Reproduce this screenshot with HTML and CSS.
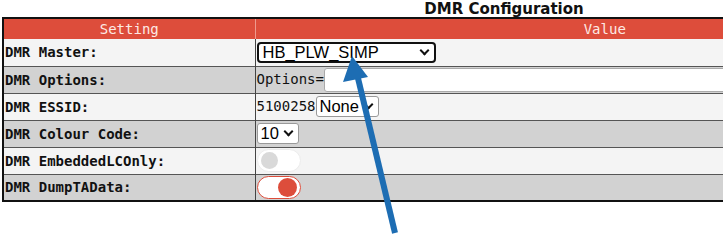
FILE: index.html
```html
<!DOCTYPE html>
<html>
<head>
    <title>DMR Configuration</title>
    <link rel="stylesheet" href="styles.css">
</head>
<body>
    <div class="page">
        <h2 class="title">DMR Configuration</h2>
        <table class="config">
            <tr>
                <th class="col-setting">Setting</th>
                <th>Value</th>
            </tr>
            <tr class="light">
                <td class="label">DMR Master:</td>
                <td>
                    <div class="select master">HB_PLW_SIMP<span class="chev"></span></div>
                </td>
            </tr>
            <tr class="grey">
                <td class="label">DMR Options:</td>
                <td class="inline">Options=<div class="text-input"></div></td>
            </tr>
            <tr class="light">
                <td class="label">DMR ESSID:</td>
                <td class="inline">5100258<div class="select small">None<span class="chev"></span></div></td>
            </tr>
            <tr class="grey">
                <td class="label">DMR Colour Code:</td>
                <td><div class="select small">10<span class="chev"></span></div></td>
            </tr>
            <tr class="light">
                <td class="label">DMR EmbeddedLCOnly:</td>
                <td><div class="toggle"><span class="knob"></span></div></td>
            </tr>
            <tr class="grey">
                <td class="label">DMR DumpTAData:</td>
                <td><div class="toggle on"><span class="knob"></span></div></td>
            </tr>
        </table>
    </div>

    <svg class="arrow" width="723" height="242" viewBox="0 0 723 242">
        <line x1="395" y1="233" x2="357" y2="74" stroke="#1d6db3" stroke-width="6" />
        <polygon points="352,56 368,77 343,82" fill="#1d6db3" />
    </svg>
</body>
</html>
```

FILE: styles.css
```css
* {
    box-sizing: border-box;
    margin: 0;
    padding: 0;
}

body {
    background-color: #fff;
    width: 723px;
    height: 242px;
    overflow: hidden;
    position: relative;
}

.page {
    padding: 2px 0 0 2px;
    width: 960px;
}

.title {
    font-family: "DejaVu Sans", Verdana, sans-serif;
    font-weight: bold;
    font-size: 15px;
    line-height: 15px;
    color: #111;
    text-align: center;
    padding-left: 46px;
}

.config {
    border-collapse: collapse;
    width: 954px;
    border: 2px solid #111;
    font-family: "DejaVu Sans Mono", "Liberation Mono", monospace;
    font-size: 14px;
}

.config th {
    background-color: #dd4d3b;
    color: #fde9e4;
    font-weight: normal;
    height: 21px;
    border-left: 1px solid #ee9a8e;
}

.config th.col-setting {
    width: 252px;
    border-left: none;
}

.config td {
    height: 27px;
    border-top: 1px solid #555;
    border-left: 1px solid #444;
    padding: 0 0 0 1px;
    color: #111;
}

.config td.label {
    border-left: none;
    font-weight: bold;
    padding-left: 1px;
}

.light td {
    background-color: #f4f4f4;
}

.grey td {
    background-color: #d2d2d2;
}

.config tr:nth-child(2) td {
    border-top: none;
}

.inline {
    white-space: nowrap;
}

.inline > * {
    vertical-align: middle;
}

.select {
    display: inline-flex;
    align-items: center;
    font-family: "Liberation Sans", Arial, sans-serif;
    font-size: 16.5px;
    color: #000;
    background-color: #fff;
    border: 1px solid #999;
    border-radius: 3px;
    height: 21px;
    padding: 0 4px 0 3px;
}

.select.master {
    width: 179px;
    border: 2px solid #111;
    border-radius: 4px;
    padding-left: 4px;
}

.select.master .chev {
    margin-left: auto;
}

.chev {
    display: inline-block;
    width: 7px;
    height: 7px;
    border-right: 2px solid #111;
    border-bottom: 2px solid #111;
    transform: rotate(45deg);
    margin: -4px 2px 0 6px;
}

.text-input {
    display: inline-block;
    width: 420px;
    height: 24px;
    background-color: #fff;
    border: 1px solid #aaa;
    border-radius: 3px;
}

.toggle {
    width: 44px;
    height: 23px;
    border-radius: 12px;
    background-color: #fff;
    border: 1px solid #ececec;
    display: flex;
    align-items: center;
    padding: 0 3px;
}

.knob {
    width: 17px;
    height: 17px;
    border-radius: 50%;
    background-color: #d9d9d9;
}

.toggle.on {
    border-color: #dd4d3b;
    justify-content: flex-end;
}

.toggle.on .knob {
    background-color: #dd4d3b;
    width: 19px;
    height: 19px;
}

.arrow {
    position: absolute;
    left: 0;
    top: 0;
}
```
